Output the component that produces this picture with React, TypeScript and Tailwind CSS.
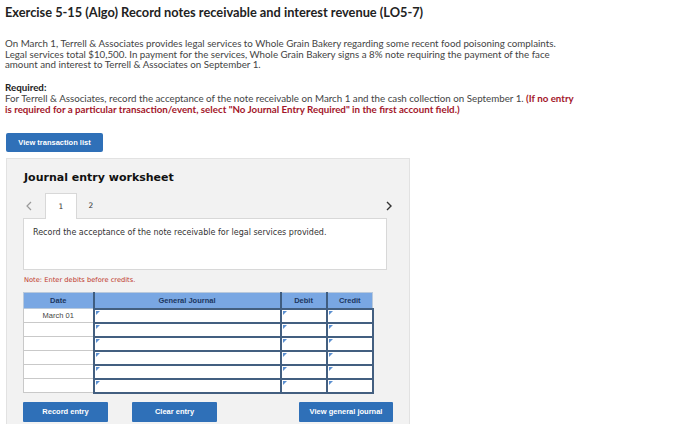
import React from "react";

const rows = ["March 01", "", "", "", "", ""];

function Marker() {
  return (
    <svg className="absolute left-[1px] top-[1px]" width="4" height="4" viewBox="0 0 4 4">
      <polygon points="0,0 4,0 0,4" fill="#5b8fd0" />
    </svg>
  );
}

export default function App() {
  return (
    <div className="w-[700px] h-[424px] overflow-hidden bg-white text-[#333]">
      <div className="pl-[5px] pt-[4px] font-['Lato',sans-serif]">
        <h1 className="text-[12.8px] leading-[16px] font-bold text-[#222]">
          Exercise 5-15 (Algo) Record notes receivable and interest revenue (LO5-7)
        </h1>
        <p className="mt-[18px] text-[9.75px] leading-[10.7px] text-[#444] w-[640px]">
          On March 1, Terrell &amp; Associates provides legal services to Whole Grain Bakery regarding some recent food poisoning complaints.
          <br />
          Legal services total $10,500. In payment for the services, Whole Grain Bakery signs a 8% note requiring the payment of the face
          <br />
          amount and interest to Terrell &amp; Associates on September 1.
        </p>
        <div className="mt-[12px] text-[9.75px] leading-[10.7px] text-[#444]">
          <div className="font-bold text-[#222]">Required:</div>
          <div>
            For Terrell &amp; Associates, record the acceptance of the note receivable on March 1 and the cash collection on September 1.{" "}
            <span className="font-bold text-[#a3162a]">(If no entry</span>
          </div>
          <div className="font-bold text-[#a3162a]">
            is required for a particular transaction/event, select "No Journal Entry Required" in the first account field.)
          </div>
        </div>
        <button className="mt-[19px] ml-[1px] w-[97px] h-[19px] bg-[#2f70b8] rounded-[2px] text-white text-[7.5px] font-bold font-['Liberation_Sans',Arial,sans-serif] flex items-center justify-center">
          View transaction list
        </button>
      </div>
      <div className="ml-[6px] mt-[6px] w-[404px] h-[300px] bg-[#f2f2f2] border border-[#e2e2e2] pl-[16px] pt-[11px]">
        <div className="pl-[1px] text-[11px] leading-[16px] font-bold text-[#111] font-['DejaVu_Sans',Verdana,sans-serif]">
          Journal entry worksheet
        </div>
        <div className="mt-[7px] w-[369px] flex items-end h-[25px] font-['DejaVu_Sans',Verdana,sans-serif]">
          <div className="w-[22px] h-[25px] flex items-center justify-start pl-[3px]">
            <svg width="6" height="10" viewBox="0 0 6 10">
              <polyline points="5,1 1,5 5,9" fill="none" stroke="#9a9a9a" strokeWidth="1.2" />
            </svg>
          </div>
          <div className="w-[32px] h-[26px] bg-white border border-[#d8d8d8] border-b-0 flex items-center justify-center text-[7.5px] text-[#333] relative z-10 -mb-[1px]">
            1
          </div>
          <div className="w-[28px] h-[25px] flex items-center justify-center text-[7.5px] text-[#333]">2</div>
          <div className="flex-1" />
          <div className="w-[6px] h-[25px] flex items-center justify-center">
            <svg width="6" height="10" viewBox="0 0 6 10">
              <polyline points="1,1 5,5 1,9" fill="none" stroke="#333" strokeWidth="1.4" />
            </svg>
          </div>
        </div>
        <div className="w-[364px] h-[52px] bg-white border border-[#d8d8d8] pl-[9px] pt-[9px] text-[8px] leading-[10px] text-[#333] font-['DejaVu_Sans',Verdana,sans-serif]">
          Record the acceptance of the note receivable for legal services provided.
        </div>
        <div className="mt-[6px] pl-[1px] text-[6.7px] leading-[8px] text-[#c0392b] font-['DejaVu_Sans',Verdana,sans-serif]">
          Note: Enter debits before credits.
        </div>
        <table className="mt-[8px] border-collapse font-['Liberation_Sans',Arial,sans-serif] text-[7.5px]">
          <thead>
            <tr className="h-[16px] bg-[#79a7e3]">
              <th className="w-[70px] border border-[#b9c9dc] font-bold text-[#1c3660]">Date</th>
              <th className="w-[187px] border border-[#b9c9dc] border-l-2 border-l-[#3f5d80] font-bold text-[#1c3660]">General Journal</th>
              <th className="w-[46px] border border-[#b9c9dc] border-l-2 border-l-[#3f5d80] font-bold text-[#1c3660]">Debit</th>
              <th className="w-[46px] border border-[#b9c9dc] border-l-2 border-l-[#3f5d80] font-bold text-[#1c3660]">Credit</th>
            </tr>
          </thead>
          <tbody>
            {rows.map((d, i) => (
              <tr key={i} className="h-[14px]">
                <td className="border border-[#c9c9c9] bg-white text-center text-[#444] p-0">{d}</td>
                <td className="relative border-2 border-[#435f80] bg-white p-0"><Marker /></td>
                <td className="relative border-2 border-[#435f80] bg-white p-0"><Marker /></td>
                <td className="relative border-2 border-[#435f80] bg-white p-0"><Marker /></td>
              </tr>
            ))}
          </tbody>
        </table>
        <div className="mt-[8px] flex font-['Liberation_Sans',Arial,sans-serif] text-[7.5px] font-bold text-white">
          <button className="w-[85px] h-[20px] bg-[#2f70b8] rounded-[1px]">Record entry</button>
          <button className="ml-[24px] w-[85px] h-[20px] bg-[#2f70b8] rounded-[1px]">Clear entry</button>
          <button className="ml-[82px] w-[94px] h-[20px] bg-[#2f70b8] rounded-[1px]">View general journal</button>
        </div>
      </div>
    </div>
  );
}
